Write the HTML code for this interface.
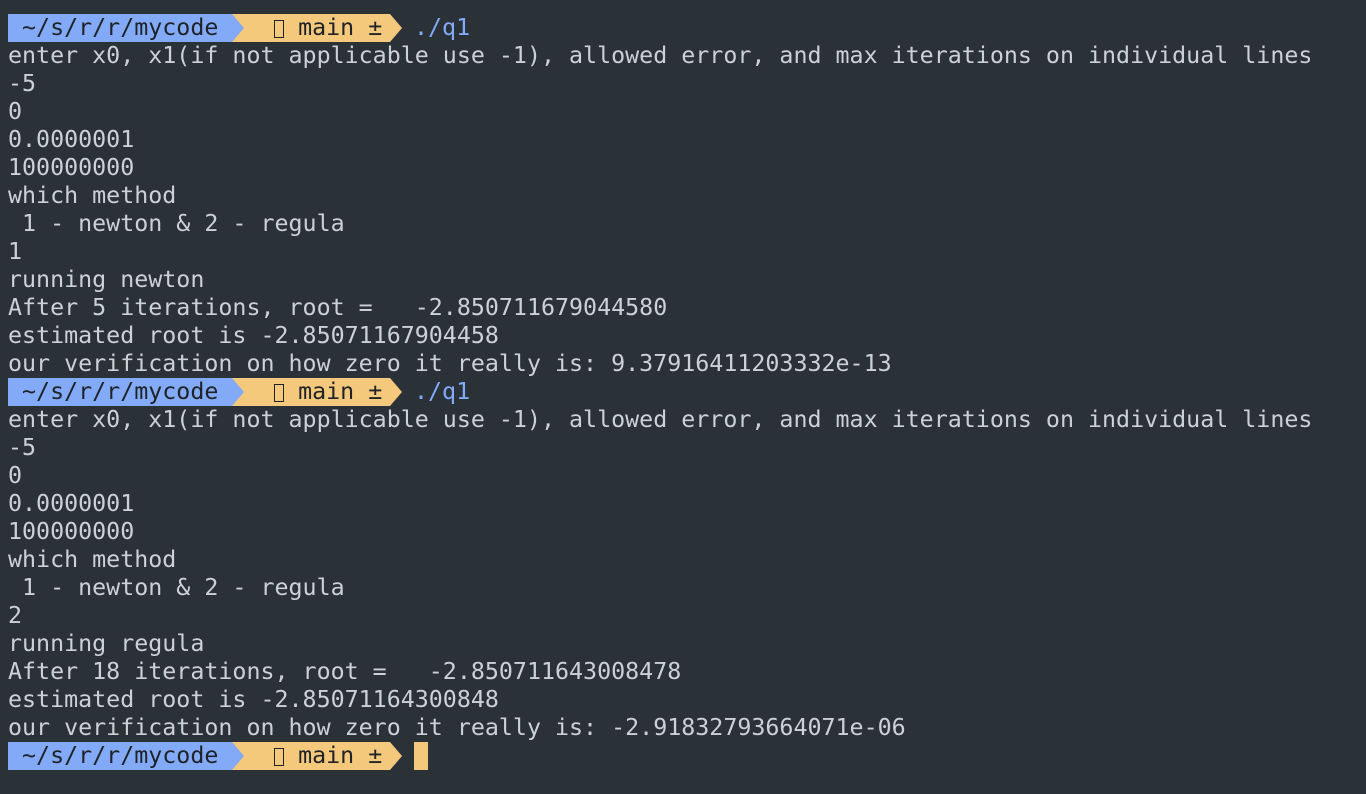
<!DOCTYPE html>
<html><head><meta charset="utf-8"><style>
html,body{margin:0;padding:0;background:#2a3238;width:1366px;height:794px;overflow:hidden}
.t{position:absolute;left:8px;top:14px;font-family:"DejaVu Sans Mono","Liberation Mono",monospace;font-size:23.3px;color:#cdd1d5}
.l{height:28px;line-height:28px;white-space:pre}
.p{position:relative;height:28px;line-height:28px;white-space:pre}
.b{position:absolute;left:0;top:0;height:28px;width:224px;background:#82aaf7;color:#1f2328}
.ba{position:absolute;left:224px;top:0;width:0;height:0;border-top:14px solid transparent;border-bottom:14px solid transparent;border-left:12px solid #82aaf7;z-index:2}
.y{position:absolute;left:224px;top:0;height:28px;width:158px;background:#f5c97c;color:#1f2328}
.ya{position:absolute;left:382px;top:0;width:0;height:0;border-top:14px solid transparent;border-bottom:14px solid transparent;border-left:12px solid #f5c97c}
.c{position:absolute;left:406px;top:0;color:#82aaf7}
.cur{position:absolute;left:406px;top:0;width:14px;height:28px;background:#f5c97c}
.box{display:inline-block;width:10px;height:18px;border:1.5px solid #1f2328;vertical-align:-3px;box-sizing:border-box}
</style></head><body><div class="t"><div class="p"><div class="b"> ~/s/r/r/mycode</div><div class="ba"></div><div class="y">   <span class="box"></span> main ±</div><div class="ya"></div><div class="c">./q1</div></div><div class="l">enter x0, x1(if not applicable use -1), allowed error, and max iterations on individual lines</div><div class="l">-5</div><div class="l">0</div><div class="l">0.0000001</div><div class="l">100000000</div><div class="l">which method</div><div class="l"> 1 - newton &amp; 2 - regula</div><div class="l">1</div><div class="l">running newton</div><div class="l">After 5 iterations, root =   -2.850711679044580</div><div class="l">estimated root is -2.85071167904458</div><div class="l">our verification on how zero it really is: 9.37916411203332e-13</div><div class="p"><div class="b"> ~/s/r/r/mycode</div><div class="ba"></div><div class="y">   <span class="box"></span> main ±</div><div class="ya"></div><div class="c">./q1</div></div><div class="l">enter x0, x1(if not applicable use -1), allowed error, and max iterations on individual lines</div><div class="l">-5</div><div class="l">0</div><div class="l">0.0000001</div><div class="l">100000000</div><div class="l">which method</div><div class="l"> 1 - newton &amp; 2 - regula</div><div class="l">2</div><div class="l">running regula</div><div class="l">After 18 iterations, root =   -2.850711643008478</div><div class="l">estimated root is -2.85071164300848</div><div class="l">our verification on how zero it really is: -2.91832793664071e-06</div><div class="p"><div class="b"> ~/s/r/r/mycode</div><div class="ba"></div><div class="y">   <span class="box"></span> main ±</div><div class="ya"></div><div class="cur"></div></div></div></body></html>
